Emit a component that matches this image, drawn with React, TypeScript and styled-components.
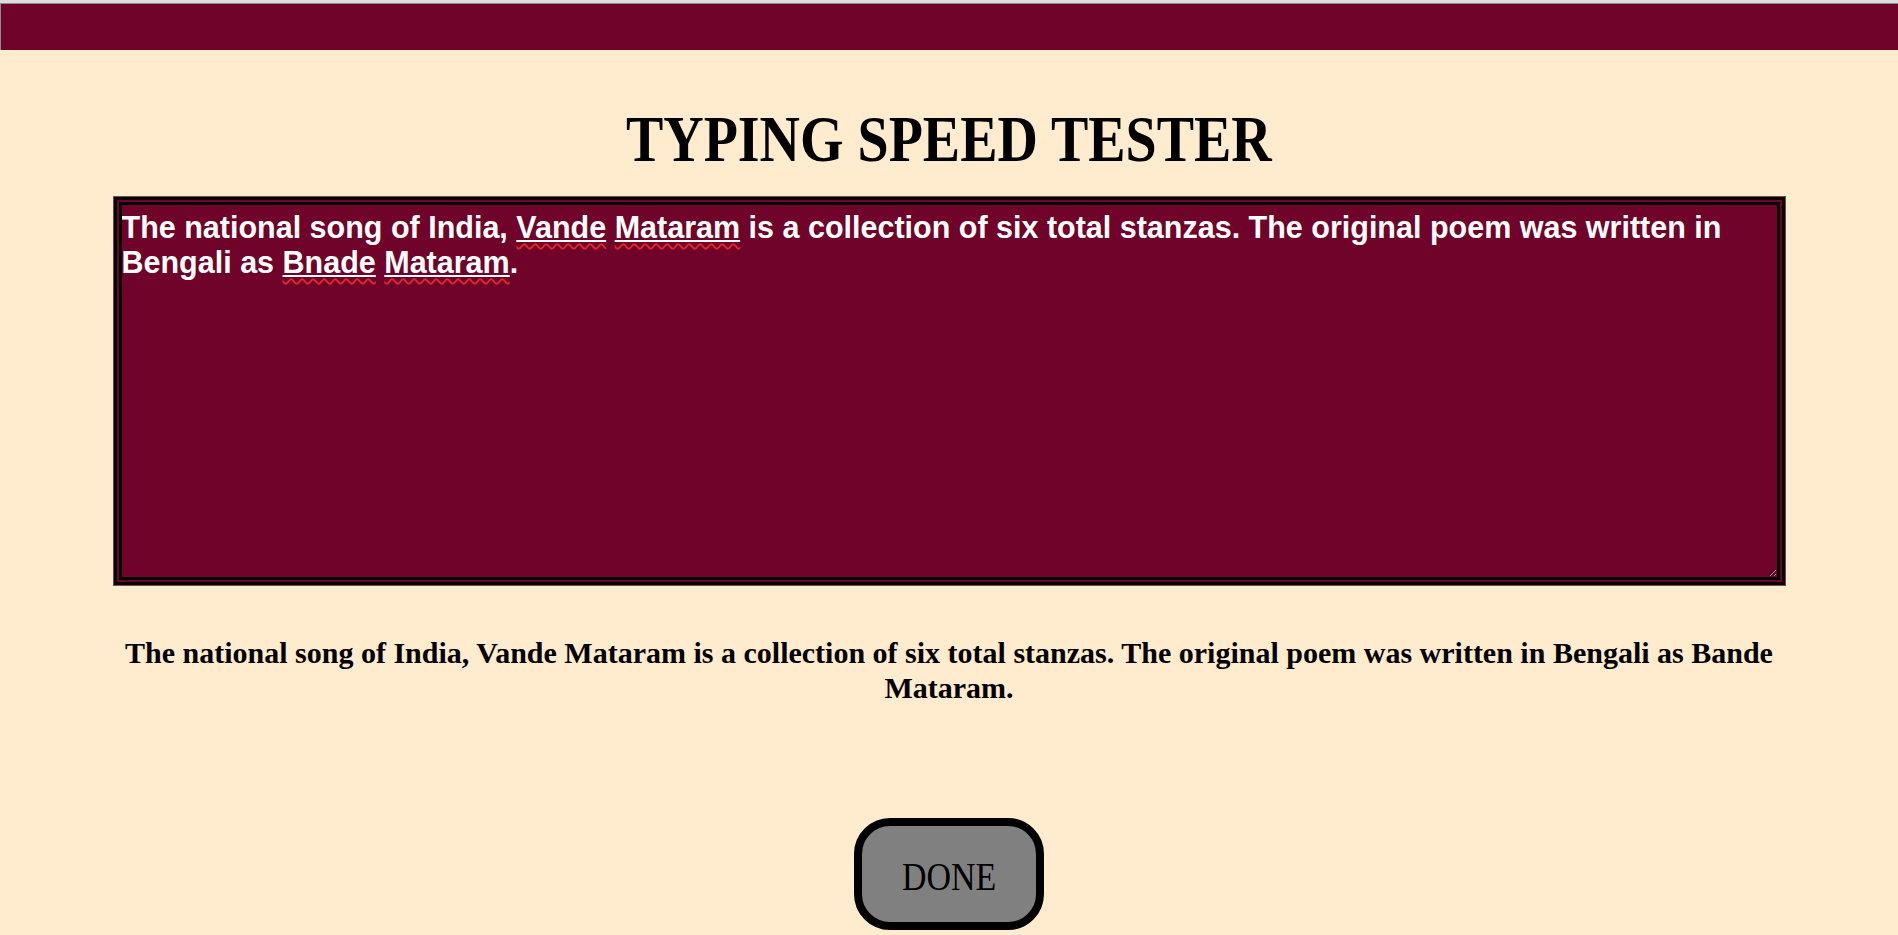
import React from "react";
import styled, { createGlobalStyle } from "styled-components";

const GlobalStyle = createGlobalStyle`
  html, body {
    margin: 0;
    padding: 0;
    background: #ffebcd;
  }
  body {
    font-family: "Liberation Serif", "Times New Roman", serif;
  }
`;

const Page = styled.div`
  display: flex;
  flex-direction: column;
  align-items: center;
  border-top: 3px solid #dedede;
`;

const TopBar = styled.header`
  align-self: stretch;
  height: 46px;
  background: #6f0329;
  border-top: 1px solid #8c8c8c;
  border-left: 1px solid #8c8c8c;
`;

const Title = styled.h1`
  margin: 51px 0 0;
  font-family: "Liberation Serif", "Times New Roman", serif;
  font-weight: 700;
  font-size: 66px;
  line-height: 76px;
  color: #000;
  text-align: center;
`;

const Condensed = styled.span<{ $scale: number }>`
  display: inline-block;
  transform: scaleX(${(p) => p.$scale});
`;

const TypingBox = styled.div`
  box-sizing: border-box;
  width: 1671px;
  height: 388px;
  margin-top: 20px;
  padding: 5px 0 0 0;
  background: #6f0329;
  border: 8px double #000;
  box-shadow: 0 0 0 1px #7a4a4a;
  color: #fff;
  font-family: "Liberation Sans", Arial, sans-serif;
  font-weight: 700;
  font-size: 30.5px;
  line-height: 35px;
  overflow: auto;
  resize: both;
  white-space: pre-wrap;
  outline: none;
`;

const Misspelled = styled.span`
  text-decoration: underline solid #ffffff;
  text-decoration-thickness: 2px;
  text-underline-offset: 2px;
`;

const Squiggle = styled.span`
  text-decoration: underline wavy #e3262a;
  text-decoration-thickness: 1.5px;
  text-underline-offset: 5px;
`;

const Prompt = styled.p`
  width: 1671px;
  margin: 51px 0 0;
  font-family: "Liberation Serif", "Times New Roman", serif;
  font-weight: 700;
  font-size: 30px;
  line-height: 34.5px;
  color: #000;
  text-align: center;
`;

const DoneButton = styled.button`
  box-sizing: border-box;
  width: 190px;
  height: 112px;
  margin-top: 113px;
  padding: 5px 0 0;
  display: flex;
  align-items: center;
  justify-content: center;
  background: #808080;
  border: 8px solid #000;
  border-radius: 36px;
  color: #000;
  font-family: "Liberation Serif", "Times New Roman", serif;
  font-weight: 400;
  font-size: 39px;
  line-height: 39px;
  cursor: pointer;
`;

function Word({ children }: { children: string }) {
  return (
    <Misspelled>
      <Squiggle>{children}</Squiggle>
    </Misspelled>
  );
}

export default function App() {
  return (
    <>
      <GlobalStyle />
      <Page>
        <TopBar />
        <Title>
          <Condensed $scale={0.848}>TYPING SPEED TESTER</Condensed>
        </Title>
        <TypingBox role="textbox" aria-multiline="true" contentEditable suppressContentEditableWarning spellCheck={false}>
          {"The national song of India, "}
          <Word>Vande</Word> <Word>Mataram</Word>
          {" is a collection of six total stanzas. The original poem was written in Bengali as "}
          <Word>Bnade</Word> <Word>Mataram</Word>.
        </TypingBox>
        <Prompt>
          The national song of India, Vande Mataram is a collection of six total stanzas. The original poem was written in Bengali as Bande Mataram.
        </Prompt>
        <DoneButton>
          <Condensed $scale={0.87}>DONE</Condensed>
        </DoneButton>
      </Page>
    </>
  );
}
